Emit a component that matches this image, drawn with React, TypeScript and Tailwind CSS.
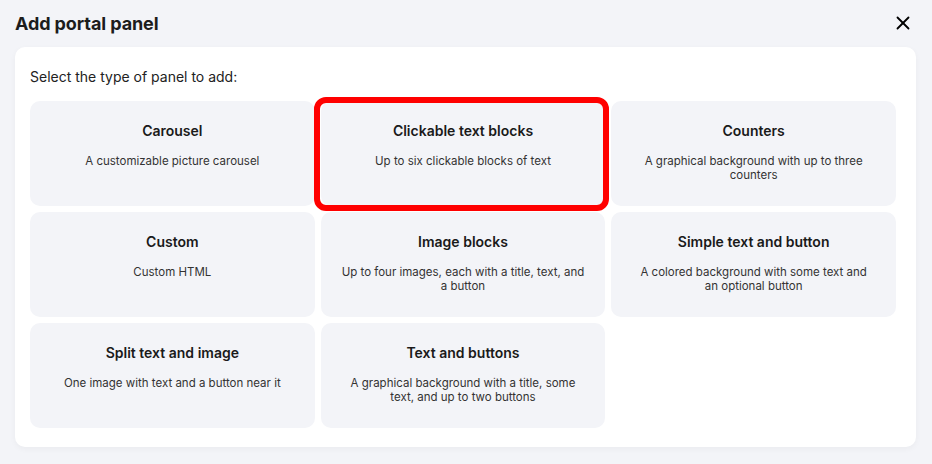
import { X } from 'lucide-react';

// descriptions carry their own line breaks so they wrap like the original
const PANELS = [
  { title: 'Carousel', desc: 'A customizable picture carousel' },
  { title: 'Clickable text blocks', desc: 'Up to six clickable blocks of text', selected: true },
  { title: 'Counters', desc: 'A graphical background with up to three\ncounters' },
  { title: 'Custom', desc: 'Custom HTML' },
  { title: 'Image blocks', desc: 'Up to four images, each with a title, text, and\na button' },
  { title: 'Simple text and button', desc: 'A colored background with some text and\nan optional button' },
  { title: 'Split text and image', desc: 'One image with text and a button near it' },
  { title: 'Text and buttons', desc: 'A graphical background with a title, some\ntext, and up to two buttons' },
];

export default function App() {
  return (
    <div
      className="w-[932px] h-[464px] bg-[#f3f4f8] px-[15px] pt-[9px] text-[#1c1c1c]"
      style={{ fontFamily: 'Inter, "Noto Sans", sans-serif' }}
    >
      <div className="flex items-center justify-between h-[28px]">
        <h1 className="text-[18px] font-bold tracking-[-0.1px]">Add portal panel</h1>
        <button className="mr-[3px] text-black">
          <X size={22} strokeWidth={2} />
        </button>
      </div>

      <div className="mt-[10px] w-[901px] h-[400px] bg-white rounded-[10px] shadow-[0_2px_6px_rgba(0,0,0,0.04)] px-[15px] pt-[21px]">
        <p className="text-[14px] text-[#222] leading-[18px]">Select the type of panel to add:</p>

        <div className="mt-[15px] grid grid-cols-3 gap-[6px] w-[866px]">
          {PANELS.map((p) => (
            <div
              key={p.title}
              className="relative h-[105px] rounded-[10px] bg-[#f3f4f8] px-[10px] pt-[20px] text-center"
            >
              <div className="text-[14px] font-semibold leading-[20px] text-[#1a1a1a]">{p.title}</div>
              <div className="mt-[13px] text-[11.5px] leading-[14px] text-[#333] whitespace-pre-line">{p.desc}</div>
              {p.selected && (
                <div className="absolute -top-[4px] -bottom-[5px] -left-[7px] -right-[4px] border-[6px] border-[#ff0000] rounded-[12px] pointer-events-none" />
              )}
            </div>
          ))}
        </div>
      </div>
    </div>
  );
}
